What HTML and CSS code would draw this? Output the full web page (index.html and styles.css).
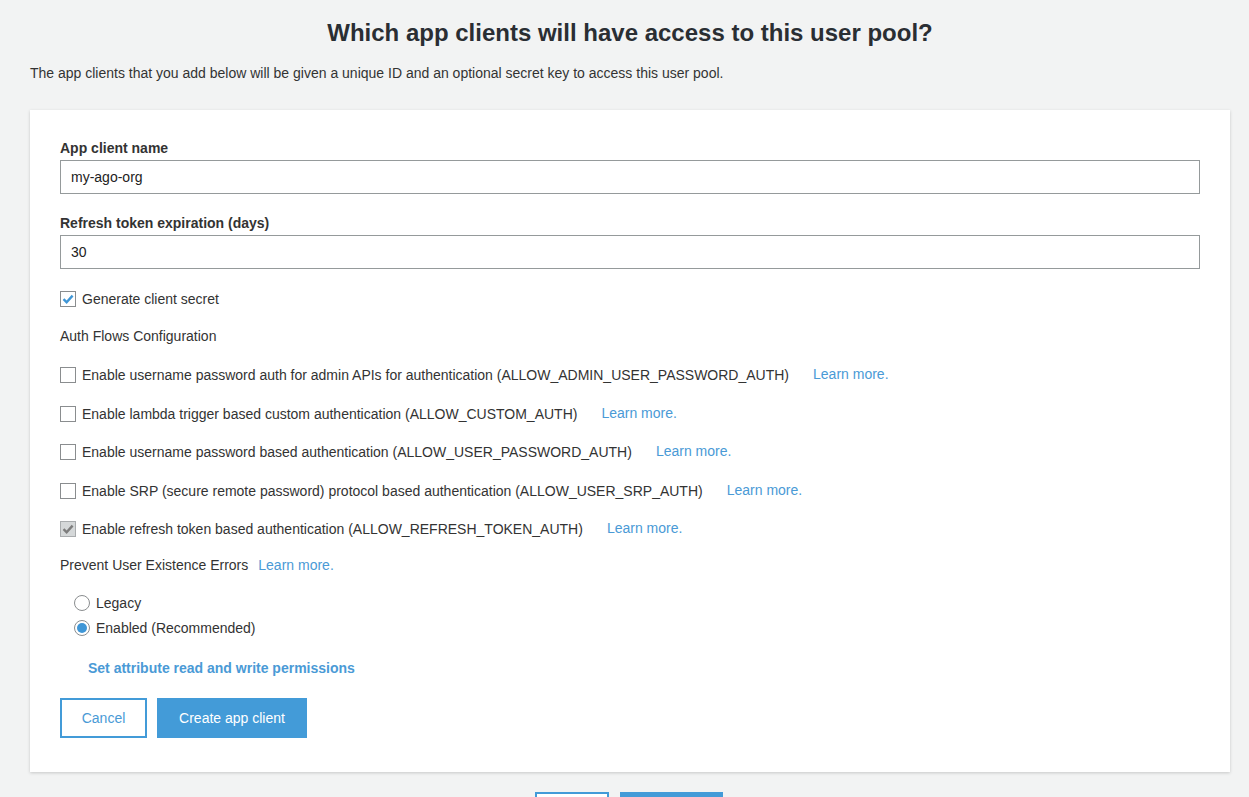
FILE: index.html
```html
<!DOCTYPE html>
<html>
<head>
<meta charset="utf-8">
<link rel="stylesheet" href="styles.css">
</head>
<body>
<div class="page">
  <h1 class="title">Which app clients will have access to this user pool?</h1>
  <p class="subtitle">The app clients that you add below will be given a unique ID and an optional secret key to access this user pool.</p>
  <div class="card">
    <div class="field">
      <label class="label">App client name</label>
      <div class="input">my-ago-org</div>
    </div>
    <div class="field field-last">
      <label class="label">Refresh token expiration (days)</label>
      <div class="input">30</div>
    </div>
    <div class="row row-secret">
      <span class="cb cb-checked"><svg viewBox="0 0 16 16" width="16" height="16"><path d="M3.5 8.2 L6.6 11.2 L12.6 4.6" fill="none" stroke="#3f96d6" stroke-width="2.4"/></svg></span>
      <span>Generate client secret</span>
    </div>
    <div class="row row-wide">Auth Flows Configuration</div>
    <div class="row row-wide">
      <span class="cb"></span>
      <span>Enable username password auth for admin APIs for authentication (ALLOW_ADMIN_USER_PASSWORD_AUTH)</span>
      <a class="link">Learn more.</a>
    </div>
    <div class="row">
      <span class="cb"></span>
      <span>Enable lambda trigger based custom authentication (ALLOW_CUSTOM_AUTH)</span>
      <a class="link">Learn more.</a>
    </div>
    <div class="row row-wide">
      <span class="cb"></span>
      <span>Enable username password based authentication (ALLOW_USER_PASSWORD_AUTH)</span>
      <a class="link">Learn more.</a>
    </div>
    <div class="row">
      <span class="cb"></span>
      <span>Enable SRP (secure remote password) protocol based authentication (ALLOW_USER_SRP_AUTH)</span>
      <a class="link">Learn more.</a>
    </div>
    <div class="row row-tight">
      <span class="cb cb-disabled"><svg viewBox="0 0 16 16" width="16" height="16"><path d="M3.5 8.2 L6.6 11.2 L12.6 4.6" fill="none" stroke="#7d7d7d" stroke-width="2.4"/></svg></span>
      <span>Enable refresh token based authentication (ALLOW_REFRESH_TOKEN_AUTH)</span>
      <a class="link">Learn more.</a>
    </div>
    <div class="row row-prevent">
      <span>Prevent User Existence Errors</span>
      <a class="link link-near">Learn more.</a>
    </div>
    <div class="radios">
      <div class="radio-row"><span class="radio"></span><span>Legacy</span></div>
      <div class="radio-row"><span class="radio radio-on"></span><span>Enabled (Recommended)</span></div>
    </div>
    <a class="perm">Set attribute read and write permissions</a>
    <div class="actions">
      <button class="btn btn-outline">Cancel</button>
      <button class="btn btn-primary">Create app client</button>
    </div>
  </div>
  <div class="footer">
    <button class="fbtn fbtn-outline"></button>
    <button class="fbtn fbtn-primary"></button>
  </div>
</div>
</body>
</html>
```

FILE: styles.css
```css
html, body {
  margin: 0;
  padding: 0;
  background: #f2f3f3;
  font-family: "Liberation Sans", Arial, sans-serif;
  color: #333333;
  font-size: 14px;
}
.page {
  padding: 0 19px 0 30px;
  height: 797px;
  overflow: hidden;
}
.title {
  margin: 0;
  padding-top: 19px;
  height: 28px;
  line-height: 28px;
  font-size: 24px;
  font-weight: bold;
  text-align: center;
  color: #2a2e33;
}
.subtitle {
  margin: 0;
  margin-top: 17px;
  line-height: 18px;
  font-size: 14px;
  color: #333;
}
.card {
  margin-top: 28px;
  background: #fff;
  box-shadow: 0 1px 3px rgba(0,0,0,0.18);
  padding: 29px 30px 34px 30px;
}
.field {
  display: flex;
  flex-direction: column;
  margin-bottom: 20px;
}
.field-last {
  margin-bottom: 21px;
}
.label {
  font-weight: bold;
  line-height: 18px;
  margin-bottom: 3px;
  color: #333;
}
.input {
  height: 32px;
  border: 1px solid #959a9b;
  line-height: 32px;
  padding: 0 10px;
  color: #222;
}
.row {
  display: flex;
  align-items: center;
  height: 18px;
  margin-bottom: 20px;
  line-height: 18px;
  color: #333;
}
.row-secret {
  margin-bottom: 19px;
}
.row-wide {
  margin-bottom: 21px;
}
.row-tight {
  margin-bottom: 18px;
}
.row-prevent {
  margin-bottom: 19px;
}
.cb {
  box-sizing: border-box;
  width: 16px;
  height: 16px;
  border: 1px solid #8a8d8f;
  margin-right: 6px;
  flex: none;
  background: #fff;
  position: relative;
}
.cb svg {
  position: absolute;
  left: -1px;
  top: -1px;
}
.cb-disabled {
  background: #d5d8d9;
  border-color: #a9acae;
}
.link {
  color: #4a9ad6;
  margin-left: 24px;
  position: relative;
  top: -1px;
}
.link-near {
  margin-left: 10px;
  top: 0;
}
.radios {
  padding-left: 14px;
  padding-top: 1px;
}
.radio-row {
  display: flex;
  align-items: center;
  height: 18px;
  margin-bottom: 7px;
}
.radio {
  box-sizing: border-box;
  width: 16px;
  height: 16px;
  border-radius: 50%;
  border: 1px solid #8a8d8f;
  margin-right: 6px;
  background: #fff;
  position: relative;
}
.radio-on::after {
  content: "";
  position: absolute;
  left: 2px;
  top: 2px;
  width: 10px;
  height: 10px;
  border-radius: 50%;
  background: #3f96d6;
}
.perm {
  display: block;
  margin-top: 22px;
  margin-left: 28px;
  font-weight: bold;
  color: #4a9ad6;
  line-height: 18px;
}
.actions {
  display: flex;
  gap: 10px;
  margin-top: 21px;
}
.btn {
  height: 40px;
  font-family: "Liberation Sans", Arial, sans-serif;
  font-size: 14px;
  cursor: pointer;
}
.btn-outline {
  box-sizing: border-box;
  width: 87px;
  background: #fff;
  border: 2px solid #439bd8;
  color: #4a9ad6;
}
.btn-primary {
  width: 150px;
  background: #439bd8;
  border: none;
  color: #fff;
}
.footer {
  display: flex;
  justify-content: center;
  gap: 11px;
  margin-top: 20px;
  padding-right: 2px;
}
.fbtn {
  height: 40px;
  padding: 0;
}
.fbtn-outline {
  width: 74px;
  background: #fff;
  border: 2px solid #439bd8;
  box-sizing: border-box;
}
.fbtn-primary {
  width: 103px;
  background: #439bd8;
  border: none;
}
```
